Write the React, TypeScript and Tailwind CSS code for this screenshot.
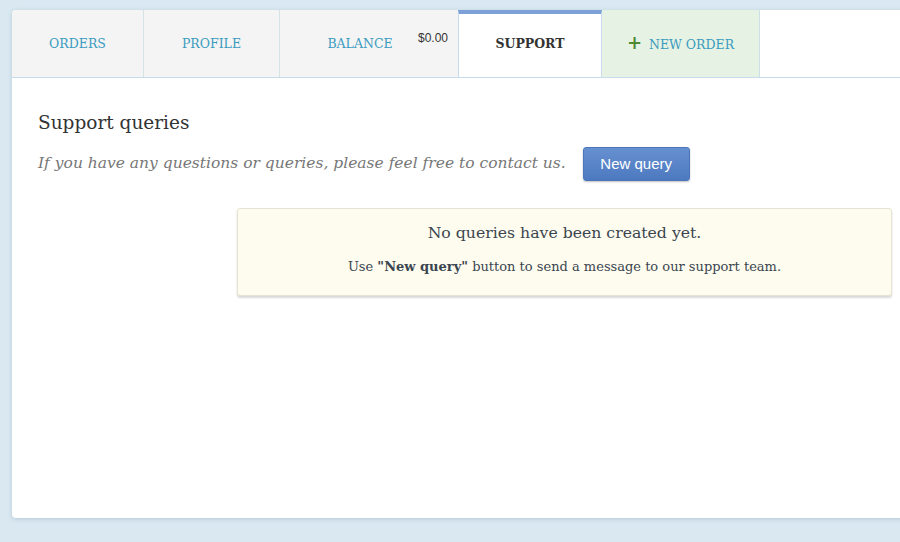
import React from 'react'

type Tab = {
    id: string
    label: string
    width: string
    active?: boolean
    extra?: string
    green?: boolean
}

const tabs: Tab[] = [
    { id: 'orders', label: 'ORDERS', width: 'w-[132px]' },
    { id: 'profile', label: 'PROFILE', width: 'w-[136px]' },
    { id: 'balance', label: 'BALANCE', width: 'w-[179px]', extra: '$0.00' },
    { id: 'support', label: 'SUPPORT', width: 'w-[144px]', active: true },
    { id: 'new', label: 'NEW ORDER', width: 'w-[158px]', green: true },
]

const serif = "font-['DejaVu_Serif',serif]"

export default function App() {
    return (
        <div className="w-[900px] h-[542px] overflow-hidden bg-[#d9e8f1] pt-[10px] pl-[12px]">
            <div className="w-[900px] h-[508px] bg-white rounded-l-[4px] shadow-[0_1px_4px_rgba(120,150,170,0.35)] flex flex-col">
                {/* TABS */}
                <div className="flex h-[68px] border-b border-[#c6dcec] relative">
                    {tabs.map((t) => (
                        <div
                            key={t.id}
                            className={[
                                t.width,
                                'relative h-full flex items-center justify-center border-r pt-[2px]',
                                t.active
                                    ? 'bg-white border-t-4 border-t-[#7ea0d8] border-r-[#c6dcec] border-l border-l-[#c6dcec] -ml-px -mb-px h-[68px] pb-[4px]'
                                    : t.green
                                      ? 'bg-[#e6f2e3] border-r-[#cde0e6]'
                                      : 'bg-[#f4f4f4] border-r-[#d4e3e3]',
                                t.id === 'orders' ? 'rounded-tl-[4px]' : '',
                            ].join(' ')}
                        >
                            <span
                                className={[
                                    serif,
                                    'text-[12.5px]',
                                    t.active ? 'font-bold text-[#333333]' : 'text-[#3a9bc0]',
                                    t.extra ? '-ml-[18px]' : '',
                                ].join(' ')}
                            >
                                {t.green && <span className="text-[#4d8a32] font-bold text-[18px] mr-[7px] leading-none">+</span>}
                                {t.label}
                            </span>
                            {t.extra && (
                                <span className="absolute top-[19px] right-[10px] font-['Liberation_Sans',sans-serif] text-[12px] text-[#333]">
                                    {t.extra}
                                </span>
                            )}
                        </div>
                    ))}
                    <div className="flex-1 flex justify-end items-start pt-[22px]">
                        <div className="w-[18px] h-[31px] bg-[#f1f1f1] border border-[#e6e6e6] rounded-l-[4px] mr-[-13px]" />
                    </div>
                </div>

                {/* CONTENT */}
                <div className="pl-[26px] pt-[33px]">
                    <h2 className={`${serif} text-[18.5px] text-[#333] leading-[24px]`}>Support queries</h2>
                    <div className="flex items-center mt-[12px]">
                        <p className={`${serif} italic text-[15.5px] text-[#777]`}>
                            If you have any questions or queries, please feel free to contact us.
                        </p>
                        <button className="ml-[17px] w-[107px] h-[34px] rounded-[3px] bg-gradient-to-b from-[#6690d0] to-[#4d79c0] border border-[#4a75bb] shadow-[0_1px_2px_rgba(0,0,0,0.25)] font-['Liberation_Sans',sans-serif] text-[15px] text-white">
                            New query
                        </button>
                    </div>

                    <div className="ml-[199px] mt-[27px] w-[655px] h-[88px] bg-[#fefcee] border border-[#e6e3d3] rounded-[3px] shadow-[0_2px_2px_rgba(0,0,0,0.15)] flex flex-col items-center pt-[12px]">
                        <div className={`${serif} text-[15.7px] text-[#3a4550] leading-[24px]`}>
                            No queries have been created yet.
                        </div>
                        <div className={`${serif} text-[13px] text-[#3a4550] mt-[12px]`}>
                            Use <b>"New query"</b> button to send a message to our support team.
                        </div>
                    </div>
                </div>
            </div>
        </div>
    )
}
